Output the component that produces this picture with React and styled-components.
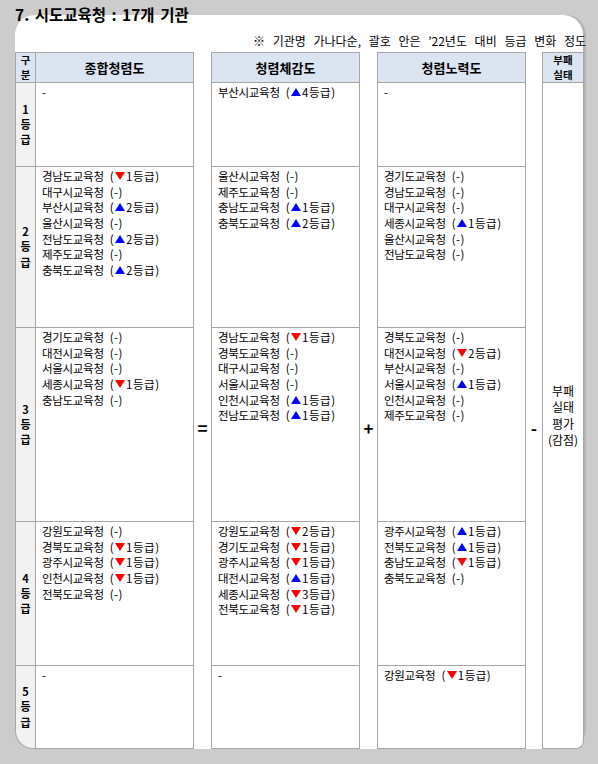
import React from 'react';
import styled, { createGlobalStyle } from 'styled-components';

const GlobalStyle = createGlobalStyle`
    html, body {
        margin: 0;
        background: #cccccc;
    }
    body {
        font-family: "Noto Sans CJK KR", "Noto Sans", sans-serif;
        color: #000;
    }
`;

const Page = styled.div`
    padding: 5px 0 15px 15px;
`;

const Title = styled.div`
    position: relative;
    z-index: 1;
    font-size: 15.5px;
    font-weight: bold;
    line-height: 18px;
    margin-bottom: -8px;
    word-spacing: 2px;
`;

const Panel = styled.div`
    width: 568px;
    background: white;
    border-radius: 20px;
    padding-top: 18px;
    box-shadow: 3px 0 0 #b4b4b4;
`;

const Note = styled.div`
    text-align: right;
    font-size: 12px;
    line-height: 15px;
    margin: 0 -3px 4px 0;
    word-spacing: 5px;
`;

const Table = styled.div`
    width: 569px;
    display: grid;
    grid-template-columns: 21px 158px 17px 149px 17px 149px 16px 42px;
    grid-template-rows: 31px 84px 161px 194px 144px 83px;
`;

const Cell = styled.div`
    grid-column: ${({ $col }) => $col};
    grid-row: ${({ $row }) => $row} / span ${({ $span }) => $span || 1};
    box-sizing: border-box;
    background: white;
    border-right: 1px solid #a6a6a6;
    border-bottom: 1px solid #a6a6a6;
    border-left: ${({ $first }) => ($first ? '1px solid #a6a6a6' : 'none')};
    border-top: ${({ $row }) => ($row === 1 ? '1px solid #a6a6a6' : 'none')};
`;

const HeadCell = styled(Cell)`
    background: #dbe5f1;
    font-weight: bold;
    font-size: ${({ $small }) => ($small ? '10.5px' : '13px')};
    line-height: ${({ $small }) => ($small ? '14.5px' : '15px')};
    display: flex;
    align-items: center;
    justify-content: center;
    text-align: center;
`;

const GradeCell = styled(Cell)`
    background: #f2f2f2;
    font-weight: bold;
    font-size: 11px;
    line-height: 15.2px;
    display: flex;
    align-items: center;
    justify-content: center;
    text-align: center;
    border-bottom-left-radius: ${({ $last }) => ($last ? '18px' : '0')};
`;

const ListCell = styled(Cell)`
    padding: 2px 6px;
    font-size: 11.5px;
    line-height: 15.7px;
`;

const Item = styled.div`
    height: 15.7px;
    white-space: nowrap;
    letter-spacing: -0.3px;
`;

const Change = styled.span`
    margin-left: 6px;
    letter-spacing: 0.5px;
`;

const Tri = styled.span`
    display: inline-block;
    width: 0;
    height: 0;
    margin: 0 1px 1px 1px;
    border-left: 5px solid transparent;
    border-right: 5px solid transparent;
    border-top: ${({ $up }) => ($up ? 'none' : '8.5px solid #ff0000')};
    border-bottom: ${({ $up }) => ($up ? '8.5px solid #0000ff' : 'none')};
`;

const Operator = styled.div`
    grid-column: ${({ $col }) => $col};
    grid-row: 2 / span 5;
    display: flex;
    align-items: center;
    justify-content: center;
    padding-top: 22px;
    font-size: 17px;
    font-weight: bold;
`;

const PenaltyCell = styled(Cell)`
    display: flex;
    align-items: center;
    justify-content: center;
    text-align: center;
    font-size: 12px;
    line-height: 16.5px;
    border-bottom-right-radius: 8px;
`;

const grades = ['1', '2', '3', '4', '5'];

const overall = [
    [['-']],
    [['경남도교육청', 'd1'], ['대구시교육청', '-'], ['부산시교육청', 'u2'], ['울산시교육청', '-'], ['전남도교육청', 'u2'], ['제주도교육청', '-'], ['충북도교육청', 'u2']],
    [['경기도교육청', '-'], ['대전시교육청', '-'], ['서울시교육청', '-'], ['세종시교육청', 'd1'], ['충남도교육청', '-']],
    [['강원도교육청', '-'], ['경북도교육청', 'd1'], ['광주시교육청', 'd1'], ['인천시교육청', 'd1'], ['전북도교육청', '-']],
    [['-']],
];

const perceived = [
    [['부산시교육청', 'u4']],
    [['울산시교육청', '-'], ['제주도교육청', '-'], ['충남도교육청', 'u1'], ['충북도교육청', 'u2']],
    [['경남도교육청', 'd1'], ['경북도교육청', '-'], ['대구시교육청', '-'], ['서울시교육청', '-'], ['인천시교육청', 'u1'], ['전남도교육청', 'u1']],
    [['강원도교육청', 'd2'], ['경기도교육청', 'd1'], ['광주시교육청', 'd1'], ['대전시교육청', 'u1'], ['세종시교육청', 'd3'], ['전북도교육청', 'd1']],
    [['-']],
];

const effort = [
    [['-']],
    [['경기도교육청', '-'], ['경남도교육청', '-'], ['대구시교육청', '-'], ['세종시교육청', 'u1'], ['울산시교육청', '-'], ['전남도교육청', '-']],
    [['경북도교육청', '-'], ['대전시교육청', 'd2'], ['부산시교육청', '-'], ['서울시교육청', 'u1'], ['인천시교육청', '-'], ['제주도교육청', '-']],
    [['광주시교육청', 'u1'], ['전북도교육청', 'u1'], ['충남도교육청', 'd1'], ['충북도교육청', '-']],
    [['강원교육청', 'd1']],
];

const ChangeMark = ({ value }) => {
    if (value === '-') return <Change>(-)</Change>;
    return (
        <Change>
            (<Tri $up={value[0] === 'u'} />{value.slice(1)}등급)
        </Change>
    );
};

const Column = ({ data, col, first }) => (
    <>
        {data.map((rows, i) => (
            <ListCell key={i} $col={col} $row={i + 2} $first={first}>
                {rows.map(([name, change], j) => (
                    <Item key={j}>
                        {name}
                        {change && <ChangeMark value={change} />}
                    </Item>
                ))}
            </ListCell>
        ))}
    </>
);

const App = () => {
    return (
        <Page>
            <GlobalStyle />
            <Title>7. 시도교육청 : 17개 기관</Title>
            <Panel>
                <Note>※ 기관명 가나다순, 괄호 안은 ’22년도 대비 등급 변화 정도</Note>
                <Table>
                    <HeadCell $col={1} $row={1} $first $small>구<br />분</HeadCell>
                    <HeadCell $col={2} $row={1}>종합청렴도</HeadCell>
                    <HeadCell $col={4} $row={1} $first>청렴체감도</HeadCell>
                    <HeadCell $col={6} $row={1} $first>청렴노력도</HeadCell>
                    <HeadCell $col={8} $row={1} $first $small>부패<br />실태</HeadCell>

                    {grades.map((g, i) => (
                        <GradeCell key={g} $col={1} $row={i + 2} $first $last={i === grades.length - 1}>
                            {g}<br />등<br />급
                        </GradeCell>
                    ))}

                    <Column data={overall} col={2} />
                    <Operator $col={3}>=</Operator>
                    <Column data={perceived} col={4} first />
                    <Operator $col={5}>+</Operator>
                    <Column data={effort} col={6} first />
                    <Operator $col={7}>-</Operator>
                    <PenaltyCell $col={8} $row={2} $span={5} $first>
                        부패<br />실태<br />평가<br />(감점)
                    </PenaltyCell>
                </Table>
            </Panel>
        </Page>
    );
};

export default App;
